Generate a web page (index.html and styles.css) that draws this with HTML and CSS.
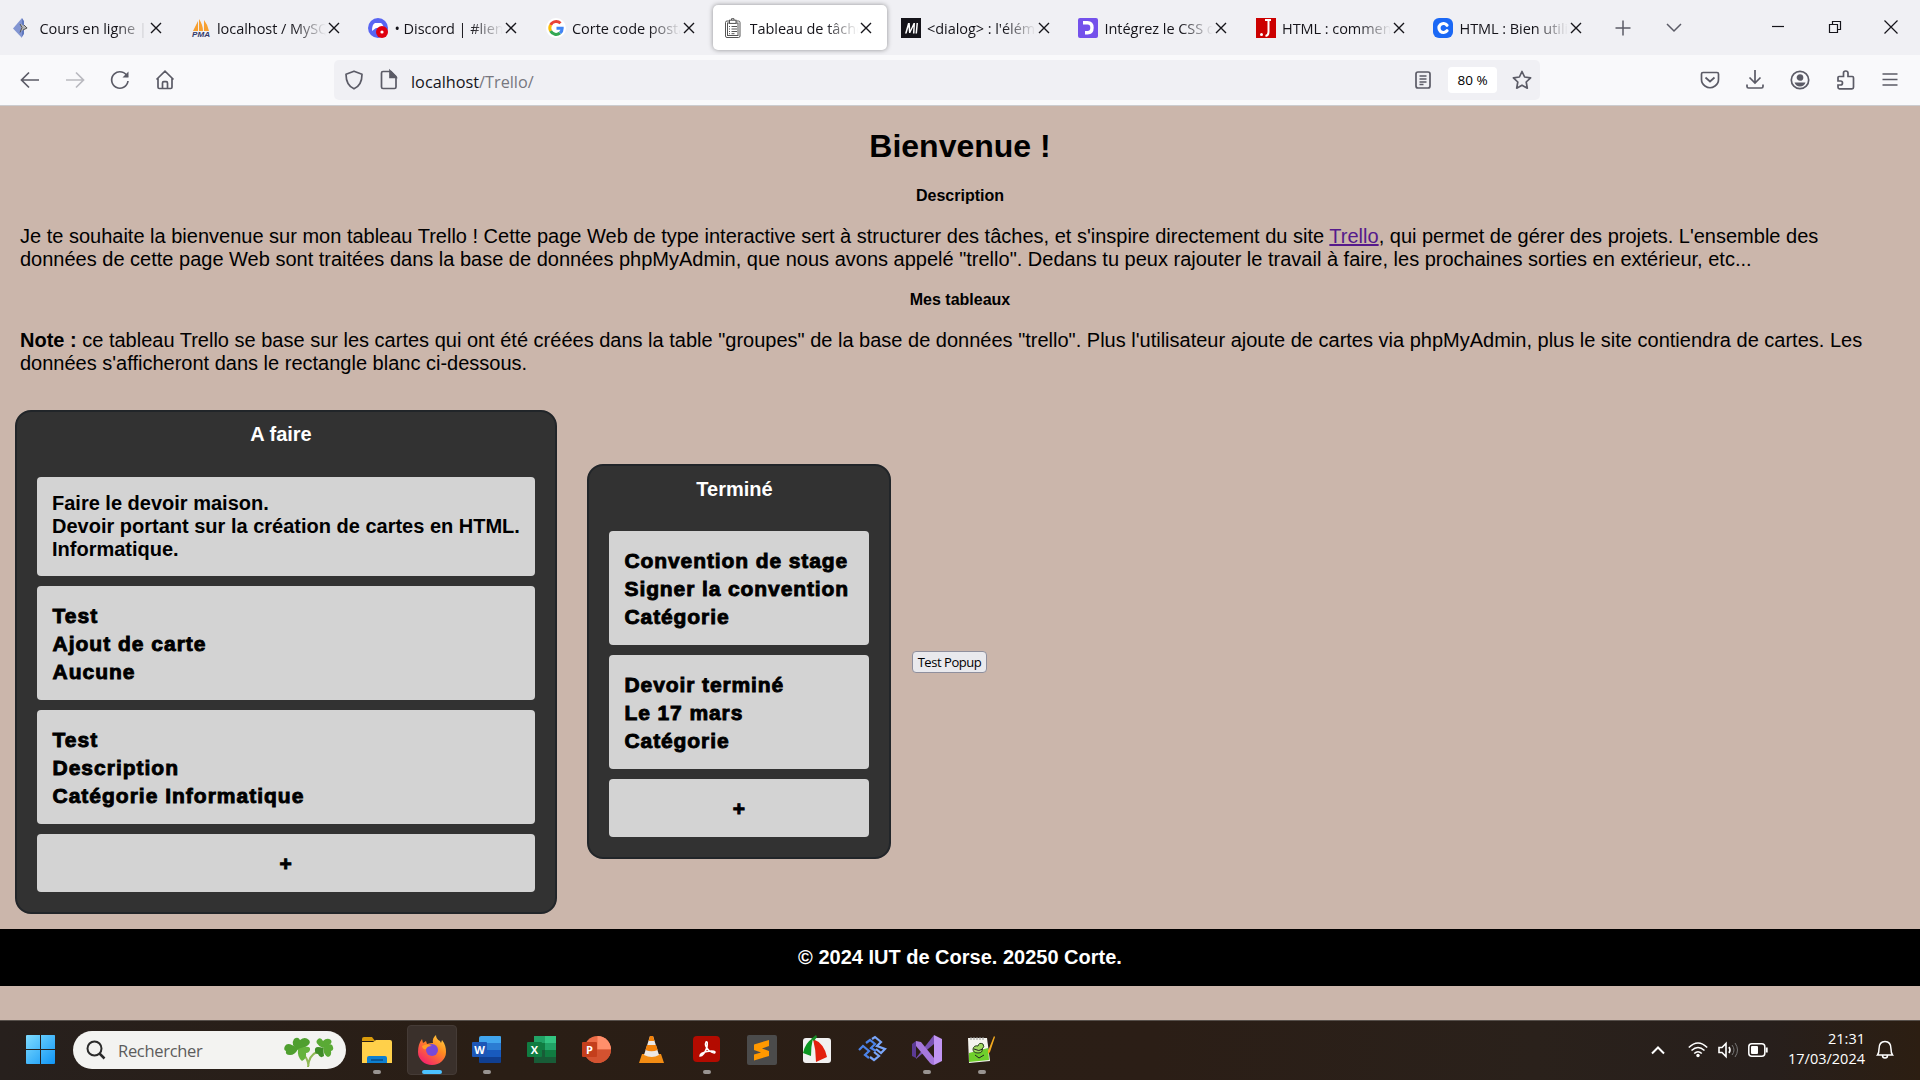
FILE: index.html
```html
<!DOCTYPE html>
<html lang="fr">
<head>
<meta charset="utf-8">
<title>Tableau de tâches</title>
<link rel="stylesheet" href="styles.css">
</head>
<body>
<div class="tabs">
  <div class="tab"><svg class="fav" viewBox="0 0 20 20"><path d="M9 0v20L0 10.500z" fill="#8295d2"/><path d="M9 0l2 3v13l-2 3z" fill="#5f78be"/><path d="M8 6l7 4-7 3z" fill="#b5b5b5"/><path d="M7 6l2 3.500-2 5M11 7l3 3-4 2" stroke="#555" fill="none"/></svg><span class="label">Cours en ligne | IUT</span><svg class="x" viewBox="0 0 12 12"><path d="M1 1l10 10M11 1L1 11"/></svg></div>
  <div class="tab"><svg class="fav" viewBox="0 0 20 20"><path d="M2 13L7 3v10zM8 13V1q4 6 4 12zM13 13V2q4 5 5 11z" fill="#f7a031"/><text class="pma" x="1" y="19" textLength="18" lengthAdjust="spacingAndGlyphs">PMA</text></svg><span class="label">localhost / MySQL</span><svg class="x" viewBox="0 0 12 12"><path d="M1 1l10 10M11 1L1 11"/></svg></div>
  <div class="tab"><svg class="fav" viewBox="0 0 20 20"><circle cx="10" cy="10" r="10" fill="#5865f2"/><path d="M4 13q0-7 3-8l6 0q3 2 3 8l-4-3H8z" fill="#fff"/><circle cx="14" cy="14" r="6" fill="#e0000f"/><circle cx="14" cy="14" r="1.600" fill="#fff"/></svg><span class="label">• Discord | #liens</span><svg class="x" viewBox="0 0 12 12"><path d="M1 1l10 10M11 1L1 11"/></svg></div>
  <div class="tab"><svg class="fav" viewBox="0 0 20 20"><circle cx="10" cy="10" r="10" fill="#fff"/><g fill="none" stroke-width="3"><path d="M14.500 5.300A6.200 6.200 0 0 0 4.600 7" stroke="#ea4335"/><path d="M4.600 7a6.200 6.200 0 0 0 0 6" stroke="#fbbc05"/><path d="M4.600 13a6.200 6.200 0 0 0 9.400 2" stroke="#34a853"/><path d="M14 15a6 6 0 0 0 2.200-4.800H10.500" stroke="#4285f4"/></g></svg><span class="label">Corte code postal</span><svg class="x" viewBox="0 0 12 12"><path d="M1 1l10 10M11 1L1 11"/></svg></div>
  <div class="tab active"><svg class="fav" viewBox="0 0 20 20" fill="none" stroke="#555"><rect x="2.500" y="3" width="14.500" height="16.500" rx="1.500"/><rect x="4.500" y="5" width="10.500" height="12.500"/><rect x="6.500" y="2.200" width="6.500" height="3.200" fill="#fff"/><path d="M8.500 2V.7h2.500V2M6 8.500h1m1.500 0H14M6 11h1m1.500 0H14M6 13.500h1m1.500 0H14M6 15.700h1m1.500 0h3"/></svg><span class="label">Tableau de tâches</span><svg class="x" viewBox="0 0 12 12"><path d="M1 1l10 10M11 1L1 11"/></svg></div>
  <div class="tab"><svg class="fav" viewBox="0 0 20 20"><rect width="20" height="20" fill="#15141a"/><path d="M4 15.500L7 5h1.800l.5 7L12.500 5H14l-.5 10.500h-1.600l.5-7L9.300 15H8l-.5-6-1.900 6.500zM15.500 5H17l-1 10.500h-1.500z" fill="#fff"/></svg><span class="label">&lt;dialog&gt; : l'élément</span><svg class="x" viewBox="0 0 12 12"><path d="M1 1l10 10M11 1L1 11"/></svg></div>
  <div class="tab"><svg class="fav" viewBox="0 0 20 20"><rect width="20" height="20" rx="2" fill="#7451eb"/><path d="M5 4.800H9.500q4.500 0 4.500 5t-4.500 5H7" stroke="#fff" stroke-width="3.400" fill="none"/></svg><span class="label">Intégrez le CSS dans</span><svg class="x" viewBox="0 0 12 12"><path d="M1 1l10 10M11 1L1 11"/></svg></div>
  <div class="tab"><svg class="fav" viewBox="0 0 20 20"><rect width="20" height="20" fill="#cc0000"/><path d="M9 2h6M12.500 2v12q0 3.500-3 4" stroke="#fff" stroke-width="2" fill="none"/><circle cx="5.500" cy="16.500" r="1.500" fill="#fff"/></svg><span class="label">HTML : comment</span><svg class="x" viewBox="0 0 12 12"><path d="M1 1l10 10M11 1L1 11"/></svg></div>
  <div class="tab"><svg class="fav" viewBox="0 0 20 20"><rect width="20" height="20" rx="6" fill="#1b68f5"/><path d="M14 7.200a4.500 4.500 0 1 0 0 5.600" stroke="#fff" stroke-width="3.200" fill="none" stroke-linecap="round"/></svg><span class="label">HTML : Bien utiliser</span><svg class="x" viewBox="0 0 12 12"><path d="M1 1l10 10M11 1L1 11"/></svg></div>
  <div class="window-tools">
    <svg width="16" height="16" viewBox="0 0 16 16"><path d="M8 .5v15M.5 8h15"/></svg>
    <svg width="16" height="16" viewBox="0 0 16 16"><path d="M1 4l7 7 7-7"/></svg>
    <svg class="dark" width="14" height="14" viewBox="0 0 14 14"><path d="M1 6.500h12"/></svg>
    <svg class="dark" width="14" height="14" viewBox="0 0 14 14"><path d="M1.500 4.500h8v8h-8zM4.500 4V1.500h8v8H10"/></svg>
    <svg class="dark" width="14" height="14" viewBox="0 0 14 14"><path d="M.5.500l13 13M13.500.500l-13 13"/></svg>
  </div>
</div>
<div class="nav">
  <div class="nav-left">
    <svg width="20" height="20" viewBox="0 0 20 20"><path d="M19 10H2M9 2.500L1.500 10 9 17.500"/></svg>
    <svg class="faded" width="20" height="20" viewBox="0 0 20 20"><path d="M1 10h17M11 2.500l7.500 7.500L11 17.500"/></svg>
    <svg width="20" height="20" viewBox="0 0 20 20"><path d="M17.500 7A8.200 8.200 0 1 0 18 11"/><path d="M18.500 1.500v6h-6z" fill="#5b5b66" stroke="none"/></svg>
    <svg width="20" height="20" viewBox="0 0 20 20"><path d="M1.500 9.500L10 1.200l8.500 8.300M3 8.500v8.700q0 1.300 1.300 1.300h11.400q1.300 0 1.300-1.300V8.500M7.500 18v-5q0-1.300 1.300-1.300h2.400q1.300 0 1.300 1.300v5"/></svg>
  </div>
  <div class="urlbar">
    <svg width="20" height="20" viewBox="0 0 20 20"><path d="M10 1.200l8 3q0 11-8 14.600Q2 15.200 2 4.200z" stroke-linejoin="round"/></svg>
    <svg width="20" height="20" viewBox="0 0 20 20"><path d="M4 1.500h8l5 5v10.500q0 1.500-1.500 1.500H4q-1.500 0-1.500-1.500V3q0-1.500 1.500-1.500z"/><path d="M11 1v6.500h6z" fill="#5b5b66"/></svg>
    <span class="url">localhost<span>/Trello/</span></span>
    <svg class="reader" width="18" height="18" viewBox="0 0 18 18"><rect x="2" y="1" width="14" height="16" rx="2"/><path d="M5.500 5h7M5.500 8h7M5.500 11h7M5.500 13.500h4" stroke-width="1.300"/></svg>
    <span class="zoom">80 %</span>
    <svg width="20" height="20" viewBox="0 0 20 20"><path d="M10 1.500l2.600 5.500 6 .8-4.400 4.200 1.100 6.200L10 15.200l-5.300 3 1.100-6.200L1.400 7.800l6-.8z" stroke-linejoin="round"/></svg>
  </div>
  <div class="nav-right">
    <svg width="20" height="20" viewBox="0 0 20 20"><path d="M3 2.500h14q1.500 0 1.500 1.500v5.500q0 4-3.500 6.500-5 3.500-10 0-3.500-2.500-3.500-6.500V4q0-1.500 1.500-1.500zM5.500 7.500L10 11.500l4.500-4"/></svg>
    <svg width="20" height="20" viewBox="0 0 20 20"><path d="M10 0v12.500M4.500 7.500L10 13l5.500-5.500M2 14.500v2q0 1.500 1.500 1.500h13q1.500 0 1.500-1.500v-2"/></svg>
    <svg width="20" height="20" viewBox="0 0 20 20"><circle cx="10" cy="10" r="8.700"/><circle cx="10" cy="7.500" r="2.500" fill="#5b5b66"/><path d="M4.500 12.500h11q-1.500 4-5.500 4t-5.500-4z" fill="#5b5b66" stroke="none"/></svg>
    <svg width="20" height="20" viewBox="0 0 20 20"><path d="M4 6.500h4.500V3q0-2 2.200-2T13 3v3.500h4.300q1.200 0 1.200 1.200v9.600q0 1.500-1.500 1.500H4.500q-1.500 0-1.500-1.500V15h2.500q2 0 2-2t-2-2H3V7.500q0-1 1-1z"/></svg>
    <svg width="20" height="20" viewBox="0 0 20 20"><path d="M2.500 4h15M2.500 9.500h15M2.500 15h15"/></svg>
  </div>
</div>
<main class="page">
  <h1>Bienvenue !</h1>
  <h2>Description</h2>
  <p>Je te souhaite la bienvenue sur mon tableau Trello ! Cette page Web de type interactive sert à structurer des tâches, et s'inspire directement du site <a href="#">Trello</a>, qui permet de gérer des projets. L'ensemble des<br>données de cette page Web sont traitées dans la base de données phpMyAdmin, que nous avons appelé "trello". Dedans tu peux rajouter le travail à faire, les prochaines sorties en extérieur, etc...</p>
  <h2>Mes tableaux</h2>
  <p><b>Note :</b> ce tableau Trello se base sur les cartes qui ont été créées dans la table "groupes" de la base de données "trello". Plus l'utilisateur ajoute de cartes via phpMyAdmin, plus le site contiendra de cartes. Les<br>données s'afficheront dans le rectangle blanc ci-dessous.</p>
  <div class="board">
    <section class="column first">
      <h3>A faire</h3>
      <div class="card plain">Faire le devoir maison.<br>Devoir portant sur la création de cartes en HTML.<br>Informatique.</div>
      <div class="card">Test<br>Ajout de carte<br>Aucune</div>
      <div class="card">Test<br>Description<br>Catégorie Informatique</div>
      <div class="card add">+</div>
    </section>
    <section class="column second">
      <h3>Terminé</h3>
      <div class="card">Convention de stage<br>Signer la convention<br>Catégorie</div>
      <div class="card">Devoir terminé<br>Le 17 mars<br>Catégorie</div>
      <div class="card add">+</div>
    </section>
    <button class="popup">Test Popup</button>
  </div>
  <footer>© 2024 IUT de Corse. 20250 Corte.</footer>
</main>
<div class="taskbar">
  <svg class="start" width="30" height="30" viewBox="0 0 30 30"><defs><linearGradient id="win" x1="0" y1="0" x2="30" y2="30" gradientUnits="userSpaceOnUse"><stop offset="0" stop-color="#7fdcff"/><stop offset="1" stop-color="#0c93f5"/></linearGradient></defs><path d="M1 0h13v14H0V1q0-1 1-1zM15 0h13.500q.500 0 .500 1v13H15zM0 15h14v14H1q-1 0-1-1zM15 15h14v13q0 1-1 1H15z" fill="url(#win)"/></svg>
  <div class="search">
    <svg width="20" height="20" viewBox="0 0 20 20" fill="none" stroke="#2b2b2b" stroke-width="2"><circle cx="8.500" cy="8.500" r="7"/><path d="M13.500 13.500l5 5" stroke-width="2.500"/></svg>
    <span>Rechercher</span>
    <svg class="clover" width="50" height="32" viewBox="0 0 50 32"><path d="M24 31q1-12 9-15M24.500 30Q24 22 18 17" stroke="#8fb955" stroke-width="2" fill="none"/><g fill="#4f9f2f"><path d="M14 14Q6 9 10 3q4-3 6 1 5-4 9 0 4 5-11 10z"/><path d="M14 13Q4 5 1 10q-2 4 1 5-1 4 4 4t8-6z"/></g><path d="M14 13q13-5 12 1-1 3-4 3 1 5-4 8-5-4-4-12z" fill="#65b33d"/><g fill="#5aaa35"><path d="M39 12Q29 7 34 3q3-2 5 2 4-4 8-1 3 4-8 8z"/><path d="M39 12q9-7 10-1 1 3-2 4 1 5-3 6-4-1-5-9z"/></g><path d="M39 12q-9-3-8 3 0 3 3 3 2 5 6 2z" fill="#3f8c28"/></svg>
  </div>
  <div class="apps">
    <div class="app run"><svg viewBox="0 0 30 30"><path d="M0 3q0-2 2-2h8l3 4H0z" fill="#d99b0b"/><path d="M0 6h11l3-2h14q2 0 2 2v21H0z" fill="#ffd04a"/><path d="M5 27v-5q0-2 2-2h16q2 0 2 2v5z" fill="#0d7fd0"/><path d="M9 24h12" stroke="#074b87" stroke-width="1.500"/></svg></div>
    <div class="app run current"><svg viewBox="0 0 30 30"><defs><linearGradient id="fx" x1="1" y1="0" x2=".3" y2="1"><stop offset="0" stop-color="#ffe14a"/><stop offset=".45" stop-color="#ff8b1f"/><stop offset="1" stop-color="#f5236c"/></linearGradient></defs><path d="M5 3l1 4 3-2 1 3q3-1 6-1-1-5 3-8 0 4 4 6l1 2 1-3q4 5 4 12A14 13 0 0 1 1 16Q1 8 5 3z" fill="url(#fx)"/><circle cx="15" cy="14" r="6" fill="#7849d8"/><path d="M5 10q5-3 10 0-5 0-6 3-3 1-4-3z" fill="#ff9d25"/></svg></div>
    <div class="app run"><svg viewBox="0 0 30 30"><path d="M7 2q0-2 2-2h19q1 0 1 1v7H7z" fill="#41a5ee"/><path d="M7 7h22v7H7z" fill="#2b7cd3"/><path d="M7 14h22v7H7z" fill="#185abd"/><path d="M7 21h22v5q0 1-1 1H8q-1 0-1-1z" fill="#103f91"/><rect y="6" width="15" height="15" rx="1" fill="#1d57b7"/><text x="7.500" y="17.500" class="glyph">W</text></svg></div>
    <div class="app"><svg viewBox="0 0 30 30"><path d="M7 0h22v27H7z" fill="#107c41"/><path d="M7 0h11v7H7z" fill="#21a366"/><path d="M18 0h11v7H18z" fill="#33c481"/><path d="M18 7h11v7H18z" fill="#21a366"/><path d="M7 14h11v7H7zM7 21h22v6H7z" fill="#185c37"/><rect y="6" width="15" height="15" rx="1" fill="#107c41"/><text x="7.500" y="17.500" class="glyph">X</text></svg></div>
    <div class="app"><svg viewBox="0 0 30 30"><circle cx="15.500" cy="13.500" r="13.500" fill="#ed6c47"/><path d="M15.500 0A13.500 13.500 0 0 1 29 13.500H15.500z" fill="#ff8f6b"/><path d="M2 13.500h27a13.500 13.500 0 0 1-27 0z" fill="#d35230"/><rect y="6" width="15" height="15" rx="1" fill="#c43e1c"/><text x="7.500" y="17.500" class="glyph">P</text></svg></div>
    <div class="app"><svg viewBox="0 0 30 30"><path d="M5 18h19l3 9H2z" fill="#f28c13"/><path d="M13 0h3l6 19q-7 4-15 0z" fill="#ece8e4"/><path d="M13 0h3l1.500 5h-6zM10 9h9l1.700 5q-6 2.500-12.300 0z" fill="#f3820a"/></svg></div>
    <div class="app run"><svg viewBox="0 0 30 30"><rect x="1" width="27" height="26" rx="4" fill="#b30b00"/><path d="M8 20q0-3 7-4.500 7-1 8 .5 0 2.500-6-1.500-5-5-3-8.500 2-1 1 5-3 9-7 9z" stroke="#fff" stroke-width="1.500" fill="none"/></svg></div>
    <div class="app"><svg viewBox="0 0 30 30"><rect y="-1" width="30" height="30" rx="2" fill="#4b4b4b"/><path d="M7 8.500L22 4v6l-7 2.500 7 2.500v5L7 24.500v-6l7-2-7-2.500z" fill="#ff9800"/></svg></div>
    <div class="app"><svg viewBox="0 0 30 30"><rect x="1" y="2" width="28" height="25" rx="3" fill="#f1f1f1"/><path d="M11 2Q3 7 1 17l8 3q0-10 2-18z" fill="#0b9621"/><path d="M11 3q11 4 14 18l-11 5q0-12-3-23z" fill="#e3200e"/><path d="M9 3l5-4 1 2-3 4z" fill="#168c25"/></svg></div>
    <div class="app"><svg viewBox="0 0 30 30" fill="none" stroke-width="2.200"><path d="M2 14l4-4 6 5-4 4 4 3M9 7l4-3 5 4-4 4 5 3" stroke="#4c83e8"/><path d="M15 3l3-2 6 5-4 4 8 3-4 4-5-4M13 21l4 3 5-4-5-4" stroke="#7aa6fa"/></svg></div>
    <div class="app run"><svg viewBox="0 0 30 30"><path d="M0 8l4-3v17l-4-2z" fill="#5b3a94"/><path d="M4 22L22-1v9L4 23z" fill="#7952b3"/><path d="M22-1l8 4v22l-8 4z" fill="#c195f3"/><path d="M4 5l5 1 13 16v7q-2 0-4-2L4 10z" fill="#a678dc"/></svg></div>
    <div class="app run"><svg viewBox="0 0 30 30"><path d="M1 2h19l3 23-21 2z" fill="#f4f4ee"/><path d="M2 17l19-5 1 12-20 2z" fill="#6fcf2c"/><path d="M6 13q1-4 5-3 1-4 5-2 2 3-1 5 1 4-4 4-5 0-5-4z" fill="#9fd95f" stroke="#253e19"/><path d="M7 13q5 3 9 0M8 19l4 3 5-3" stroke="#222" fill="none"/><path d="M27 0l1 1-5 15-2 2v-3z" fill="#f3a91f"/><path d="M4 1v3m3-3v3m3-3v3m3-3v3m3-3v3" stroke="#999"/></svg></div>
  </div>
  <div class="tray">
    <svg width="16" height="10" viewBox="0 0 16 10"><path d="M2 8.500l6-6 6 6" stroke-width="2"/></svg>
    <svg class="wifi" width="20" height="16" viewBox="0 0 20 16"><path d="M.8 5.500Q10-3.500 19.200 5.500M3.500 8.500q6.500-6 13 0M6.200 11.500q3.800-3.500 7.600 0" stroke-width="1.600"/><circle cx="10" cy="13.500" r="1.700" fill="#fff" stroke="none"/></svg>
    <svg class="sound" width="20" height="16" viewBox="0 0 20 16"><path d="M1 5.500h3l4-4v13l-4-4H1zM11 5q2 3 0 6" stroke-width="1.600"/><path d="M14 3q4 5 0 10M17 1q5 7 0 14" stroke="#777"/></svg>
    <svg class="battery" width="20" height="14" viewBox="0 0 20 14"><rect x=".8" y=".8" width="16" height="12.400" rx="3" stroke-width="1.500"/><rect x="3" y="3" width="7" height="8" rx="1" fill="#fff" stroke="none"/><path d="M18.700 4.500v5" stroke-width="2"/></svg>
    <div class="clock">21:31<br>17/03/2024</div>
    <svg class="bell" width="18" height="20" viewBox="0 0 18 20"><path d="M1.500 15q1.500-2 1.500-6 0-7.500 6-7.500T15 9q0 4 1.500 6zM6.500 15.500q0 2.500 2.500 2.500t2.500-2.500" stroke-width="1.500"/></svg>
  </div>
</div>
</body>
</html>
```
FILE: styles.css
```css
* { box-sizing: border-box; }
body { margin: 0; width: 1920px; height: 1080px; overflow: hidden; display: flex; flex-direction: column; font-family: "Liberation Sans", Arial, sans-serif; background: #cbb6ab; color: #000; }
svg { display: block; flex: none; overflow: visible; }

.tabs { height: 55px; flex: none; background: #f0f0f4; display: flex; align-items: center; padding-left: 3px; font-family: "Open Sans", "Noto Sans", sans-serif; font-size: 14.500px; color: #15141a; }
.tab { width: 173.500px; margin-right: 4px; height: 45px; flex: none; border-radius: 5px; display: flex; align-items: center; padding: 0 14.500px 0 10px; }
.tab.active { background: #fff; box-shadow: 0 0 5px rgba(0, 0, 0, .4); }
.fav { width: 20px; height: 20px; margin: 1px 6.500px 0 0; }
.pma { font: italic 700 7px "Liberation Sans", sans-serif; fill: #333a6b; }
.label { flex: 1; height: 22px; line-height: 22px; margin-top: 2px; white-space: nowrap; overflow: hidden; letter-spacing: -.05px; -webkit-mask-image: linear-gradient(to right, #000 70%, transparent 100%); mask-image: linear-gradient(to right, #000 70%, transparent 100%); }
.x { width: 12px; height: 12px; margin-left: 2px; fill: none; stroke: #15141a; stroke-width: 1.400; }
.window-tools { flex: 1; display: grid; grid-template-columns: 51px 81px 57px 56px 40px; justify-content: start; align-items: center; padding-left: 14px; }
.window-tools svg { fill: none; stroke: #5b5b66; stroke-width: 1.500; }
.window-tools .dark { stroke: #15141a; stroke-width: 1.200; margin: 0 0 2px 24px; }

.nav { height: 51px; flex: none; background: #f9f9fb; border-bottom: 1px solid #cccccf; display: flex; align-items: center; justify-content: space-between; padding: 0 20px; }
.nav svg { fill: none; stroke: #5b5b66; stroke-width: 1.700; }
.nav-left { display: flex; gap: 25px; width: 314px; }
.nav-left .faded { opacity: .4; }
.urlbar { width: 1206px; height: 40px; border-radius: 5px; background: #f0f0f4; display: flex; align-items: center; padding: 0 8px 0 10px; }
.urlbar svg + svg { margin-left: 15px; }
.url { flex: 1; margin: 4px 0 0 12px; font: 16.250px "Open Sans", "Noto Sans", sans-serif; color: #15141a; }
.url span { color: #77777f; }
.zoom { width: 49px; height: 26px; line-height: 27px; margin: 0 15px 0 16px; border-radius: 4px; background: #fff; text-align: center; font-family: "Open Sans", sans-serif; font-size: 13.500px; }
.nav-right { flex: 1; display: flex; justify-content: flex-end; gap: 25px; }

.page { flex: 1; min-height: 0; display: flex; flex-direction: column; }
h1, h2, h3, p { margin: 0; }
h1 { font-size: 32px; line-height: 36px; margin-top: 22px; text-align: center; }
h2 { font-size: 16px; line-height: 18px; text-align: center; margin-top: 23px; }
p { font-size: 20px; line-height: 23px; margin: 20px 0 0 20px; white-space: nowrap; }
p + h2 { margin-top: 20px; }
a { color: #551a8b; }
.board { margin: 35px 15px 15px; display: flex; align-items: center; }
.column { background: #323232; border: 2px solid #212529; border-radius: 16px; padding: 11px 20px 20px; display: flex; flex-direction: column; gap: 10px; }
.column.first { width: 542px; height: 504px; margin-right: 30px; }
.column.second { width: 304px; height: 395px; margin: 0 21px 1px 0; }
h3 { font-size: 20px; line-height: 23px; height: 44px; padding-right: 10px; color: #fff; text-align: center; }
.second h3 { line-height: 25px; padding-right: 9px; }
.card { background: #d3d3d3; border-radius: 4px; height: 114px; padding: 16px 15px 14px 15.500px; font-weight: 700; font-size: 21px; line-height: 28px; letter-spacing: 1px; -webkit-text-stroke: .9px #000; white-space: nowrap; }
.second .card { letter-spacing: .9px; }
.card.plain { height: 99px; padding: 15px; font-size: 20px; line-height: 23px; letter-spacing: 0; -webkit-text-stroke: 0; }
.card.add { height: 58px; text-align: center; }
.popup { width: 75px; height: 22px; padding: 0; border: 1px solid #8f8f9d; border-radius: 4px; background: #e9e9ed; font: 13px "Open Sans", sans-serif; letter-spacing: -.45px; color: #000; }
footer { height: 57px; background: #000; color: #fff; font-weight: 700; font-size: 20px; line-height: 57px; text-align: center; }

.taskbar { height: 60px; flex: none; border-top: 1px solid #57504b; background: linear-gradient(90deg, #27201d, #2a1e15 25%, #2b1e16 60%, #2a211b 80%, #271f1c 92%, #2c1e12); display: flex; align-items: center; padding: 0 0 2px 26px; font-family: "Open Sans", "Noto Sans", sans-serif; }
.search { margin-left: 17px; width: 273px; height: 38px; border-radius: 19px; background: #f3f3f1; display: flex; align-items: center; padding: 0 12px 0 13px; font-size: 16.500px; letter-spacing: -.3px; color: #5c5c5c; }
.search span { flex: 1; margin: 2px 0 0 12px; }
.clover { margin-top: 4px; }
.apps { display: flex; margin-left: 6px; gap: 5px; }
.app { width: 50px; height: 50px; border-radius: 4px; display: flex; flex-direction: column; align-items: center; padding-top: 11px; }
.app svg { width: 30px; height: 30px; }
.app.run::after { content: ""; width: 8px; height: 4px; border-radius: 2px; background: #999491; margin-top: 4px; }
.app.current { background: #3a302b; border: 1px solid #453b36; padding-top: 10px; }
.app.current::after { width: 20px; background: #4cc2ff; }
.glyph { font: 700 11px "Open Sans", sans-serif; fill: #fff; text-anchor: middle; }
.tray { margin-left: auto; display: flex; align-items: center; color: #fff; padding-right: 26px; }
.tray svg { fill: none; stroke: #fff; }
.wifi { margin-left: 22px; }
.sound { margin-left: 10px; }
.battery { margin-left: 10px; }
.clock { width: 97px; text-align: right; font-size: 14.500px; line-height: 20px; margin-bottom: 1px; }
.bell { margin-left: 11px; }
```
